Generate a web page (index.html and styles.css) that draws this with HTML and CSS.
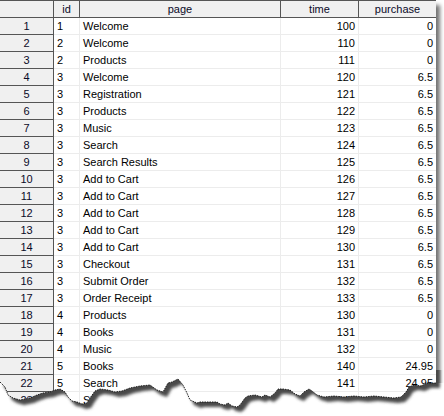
FILE: index.html
```html
<!DOCTYPE html>
<html>
<head>
<meta charset="utf-8">
<link rel="stylesheet" href="styles.css">
</head>
<body>
<div class="sheet">
  <div class="grid">
    <div class="row head">
      <div class="c rh"></div>
      <div class="c hc">id</div>
      <div class="c hc">page</div>
      <div class="c hc">time</div>
      <div class="c hc">purchase</div>
    </div>
    <div class="row"><div class="c rh">1</div><div class="c tx">1</div><div class="c tx">Welcome</div><div class="c num">100</div><div class="c num">0</div></div>
    <div class="row"><div class="c rh">2</div><div class="c tx">2</div><div class="c tx">Welcome</div><div class="c num">110</div><div class="c num">0</div></div>
    <div class="row"><div class="c rh">3</div><div class="c tx">2</div><div class="c tx">Products</div><div class="c num">111</div><div class="c num">0</div></div>
    <div class="row"><div class="c rh">4</div><div class="c tx">3</div><div class="c tx">Welcome</div><div class="c num">120</div><div class="c num">6.5</div></div>
    <div class="row"><div class="c rh">5</div><div class="c tx">3</div><div class="c tx">Registration</div><div class="c num">121</div><div class="c num">6.5</div></div>
    <div class="row"><div class="c rh">6</div><div class="c tx">3</div><div class="c tx">Products</div><div class="c num">122</div><div class="c num">6.5</div></div>
    <div class="row"><div class="c rh">7</div><div class="c tx">3</div><div class="c tx">Music</div><div class="c num">123</div><div class="c num">6.5</div></div>
    <div class="row"><div class="c rh">8</div><div class="c tx">3</div><div class="c tx">Search</div><div class="c num">124</div><div class="c num">6.5</div></div>
    <div class="row"><div class="c rh">9</div><div class="c tx">3</div><div class="c tx">Search Results</div><div class="c num">125</div><div class="c num">6.5</div></div>
    <div class="row"><div class="c rh">10</div><div class="c tx">3</div><div class="c tx">Add to Cart</div><div class="c num">126</div><div class="c num">6.5</div></div>
    <div class="row"><div class="c rh">11</div><div class="c tx">3</div><div class="c tx">Add to Cart</div><div class="c num">127</div><div class="c num">6.5</div></div>
    <div class="row"><div class="c rh">12</div><div class="c tx">3</div><div class="c tx">Add to Cart</div><div class="c num">128</div><div class="c num">6.5</div></div>
    <div class="row"><div class="c rh">13</div><div class="c tx">3</div><div class="c tx">Add to Cart</div><div class="c num">129</div><div class="c num">6.5</div></div>
    <div class="row"><div class="c rh">14</div><div class="c tx">3</div><div class="c tx">Add to Cart</div><div class="c num">130</div><div class="c num">6.5</div></div>
    <div class="row"><div class="c rh">15</div><div class="c tx">3</div><div class="c tx">Checkout</div><div class="c num">131</div><div class="c num">6.5</div></div>
    <div class="row"><div class="c rh">16</div><div class="c tx">3</div><div class="c tx">Submit Order</div><div class="c num">132</div><div class="c num">6.5</div></div>
    <div class="row"><div class="c rh">17</div><div class="c tx">3</div><div class="c tx">Order Receipt</div><div class="c num">133</div><div class="c num">6.5</div></div>
    <div class="row"><div class="c rh">18</div><div class="c tx">4</div><div class="c tx">Products</div><div class="c num">130</div><div class="c num">0</div></div>
    <div class="row"><div class="c rh">19</div><div class="c tx">4</div><div class="c tx">Books</div><div class="c num">131</div><div class="c num">0</div></div>
    <div class="row"><div class="c rh">20</div><div class="c tx">4</div><div class="c tx">Music</div><div class="c num">132</div><div class="c num">0</div></div>
    <div class="row"><div class="c rh">21</div><div class="c tx">5</div><div class="c tx">Books</div><div class="c num">140</div><div class="c num">24.95</div></div>
    <div class="row"><div class="c rh">22</div><div class="c tx">5</div><div class="c tx">Search</div><div class="c num">141</div><div class="c num">24.95</div></div>
    <div class="row"><div class="c rh">23</div><div class="c tx">5</div><div class="c tx">Search Results</div><div class="c num">142</div><div class="c num">24.95</div></div>
  </div>
  <svg class="tear" width="444" height="46" viewBox="0 370 444 46" xmlns="http://www.w3.org/2000/svg">
    <defs>
      <filter id="blur" x="-10%" y="-50%" width="120%" height="200%">
        <feGaussianBlur stdDeviation="1.6"/>
      </filter>
      <clipPath id="below">
        <path d="M0,382 L5,387 L8,395 L13,398 L20,400 L30,398 L37,395 L43,393 L50,392 L55,390 L60,389 L65,392 L68,397 L72,401 L77,402 L82,404 L87,403 L90,398 L95,391 L100,389 L108,390 L115,392 L122,391 L130,388 L140,386 L150,385 L157,390 L163,392 L168,383 L172,382 L178,379 L183,385 L187,393 L190,400 L197,403 L200,402 L207,402 L217,402 L220,404 L225,405 L228,403 L232,406 L237,407 L240,405 L245,398 L248,396 L255,395 L262,397 L265,395 L270,397 L275,393 L278,389 L283,389 L290,390 L295,394 L300,396 L304,392 L309,389 L312,391 L317,395 L324,397 L334,396 L344,397 L354,396 L364,397 L374,396 L384,397 L394,398 L401,397 L406,392 L409,387 L414,385 L421,386 L427,383 L432,383 L436,383 L436,370 L444,370 L444,416 L0,416 Z"/>
      </clipPath>
    </defs>
    <path fill="#fff" d="M0,382 L5,387 L8,395 L13,398 L20,400 L30,398 L37,395 L43,393 L50,392 L55,390 L60,389 L65,392 L68,397 L72,401 L77,402 L82,404 L87,403 L90,398 L95,391 L100,389 L108,390 L115,392 L122,391 L130,388 L140,386 L150,385 L157,390 L163,392 L168,383 L172,382 L178,379 L183,385 L187,393 L190,400 L197,403 L200,402 L207,402 L217,402 L220,404 L225,405 L228,403 L232,406 L237,407 L240,405 L245,398 L248,396 L255,395 L262,397 L265,395 L270,397 L275,393 L278,389 L283,389 L290,390 L295,394 L300,396 L304,392 L309,389 L312,391 L317,395 L324,397 L334,396 L344,397 L354,396 L364,397 L374,396 L384,397 L394,398 L401,397 L406,392 L409,387 L414,385 L421,386 L427,383 L432,383 L436,383 L444,383 L444,416 L0,416 Z"/>
    <g clip-path="url(#below)">
      <path fill="#4a4a4a" filter="url(#blur)" transform="translate(4,5)" d="M0,340 L0,382 L5,387 L8,395 L13,398 L20,400 L30,398 L37,395 L43,393 L50,392 L55,390 L60,389 L65,392 L68,397 L72,401 L77,402 L82,404 L87,403 L90,398 L95,391 L100,389 L108,390 L115,392 L122,391 L130,388 L140,386 L150,385 L157,390 L163,392 L168,383 L172,382 L178,379 L183,385 L187,393 L190,400 L197,403 L200,402 L207,402 L217,402 L220,404 L225,405 L228,403 L232,406 L237,407 L240,405 L245,398 L248,396 L255,395 L262,397 L265,395 L270,397 L275,393 L278,389 L283,389 L290,390 L295,394 L300,396 L304,392 L309,389 L312,391 L317,395 L324,397 L334,396 L344,397 L354,396 L364,397 L374,396 L384,397 L394,398 L401,397 L406,392 L409,387 L414,385 L421,386 L427,383 L432,383 L436,383 L436,340 Z"/>
    </g>
    <path fill="none" stroke="#111" stroke-width="0.9" stroke-dasharray="1.5 1" d="M0,382 L5,387 L8,395 L13,398 L20,400 L30,398 L37,395 L43,393 L50,392 L55,390 L60,389 L65,392 L68,397 L72,401 L77,402 L82,404 L87,403 L90,398 L95,391 L100,389 L108,390 L115,392 L122,391 L130,388 L140,386 L150,385 L157,390 L163,392 L168,383 L172,382 L178,379 L183,385 L187,393 L190,400 L197,403 L200,402 L207,402 L217,402 L220,404 L225,405 L228,403 L232,406 L237,407 L240,405 L245,398 L248,396 L255,395 L262,397 L265,395 L270,397 L275,393 L278,389 L283,389 L290,390 L295,394 L300,396 L304,392 L309,389 L312,391 L317,395 L324,397 L334,396 L344,397 L354,396 L364,397 L374,396 L384,397 L394,398 L401,397 L406,392 L409,387 L414,385 L421,386 L427,383 L432,383 L436,383"/>
  </svg>
</div>
</body>
</html>
```
FILE: styles.css
```css
html, body {
  margin: 0;
  padding: 0;
  background: #fff;
}
body {
  width: 444px;
  height: 416px;
  overflow: hidden;
  font-family: "Liberation Sans", Arial, sans-serif;
  font-size: 11px;
  color: #000;
}
.sheet {
  position: relative;
  width: 444px;
  height: 416px;
}
.grid {
  width: 436px;
  border-top: 1px solid #555;
  background: #fff;
  box-shadow: 4px 5px 4px rgba(0, 0, 0, 0.55);
}
.row {
  display: grid;
  grid-template-columns: 54px 26px 201px 78px 77px;
  height: 17px;
}
.c {
  box-sizing: border-box;
  height: 17px;
  line-height: 16px;
  border-right: 1px solid #ececec;
  border-bottom: 1px solid #ececec;
  white-space: nowrap;
  overflow: hidden;
}
.c:last-child {
  border-right: none;
}
.rh {
  background: #f0f0f0;
  border-right: 1px solid #555;
  border-bottom: 1px solid #555;
  text-align: center;
  color: #0a0a28;
}
.hc {
  background: #f0f0f0;
  border-right: 1px solid #555;
  border-bottom: 1px solid #555;
  text-align: center;
  color: #0a0a28;
}
.head .c:last-child {
  border-right: none;
}
.tx {
  padding-left: 3px;
}
.num {
  text-align: right;
  padding-right: 3px;
}
.tear {
  position: absolute;
  left: 0;
  top: 370px;
}
```
